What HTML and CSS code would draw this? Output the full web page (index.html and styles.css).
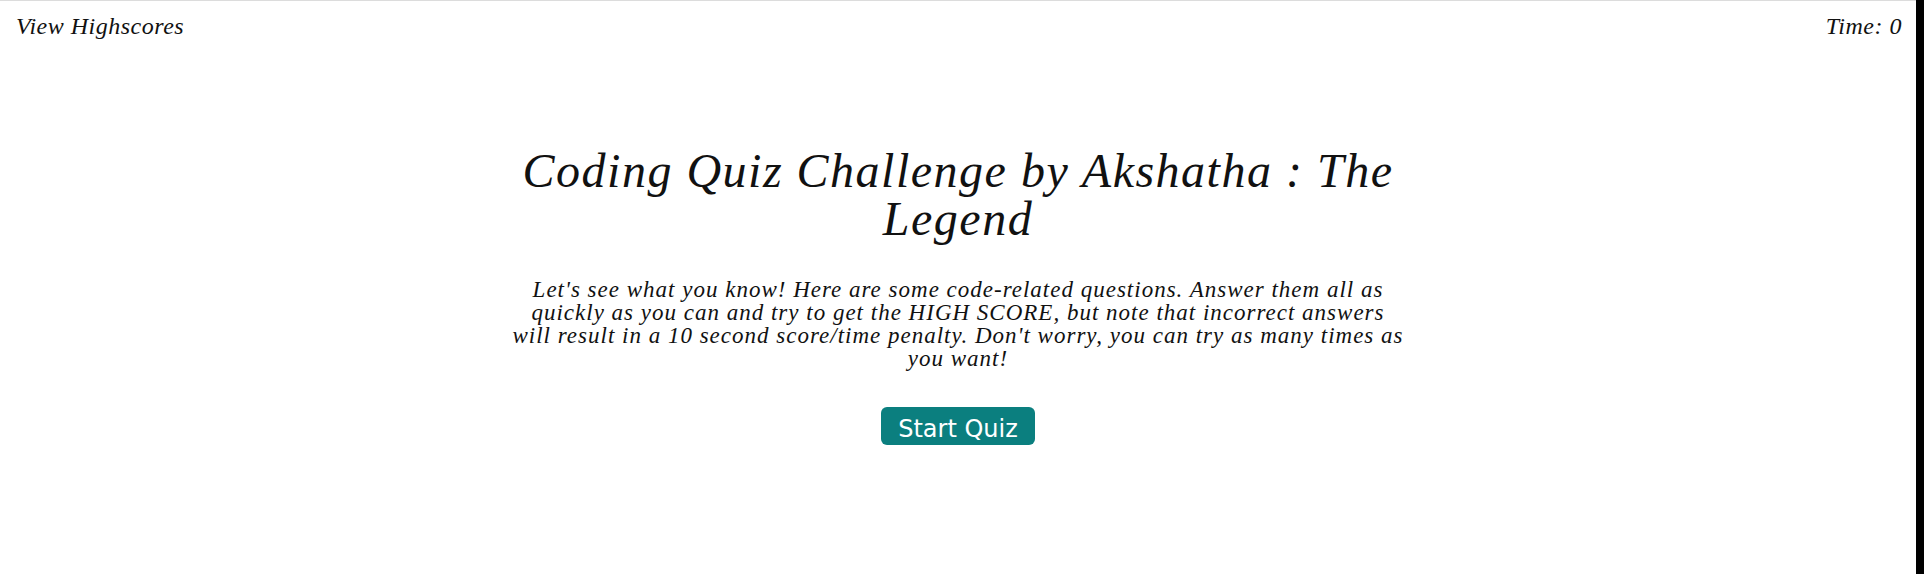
FILE: index.html
```html
<!DOCTYPE html>
<html lang="en">
<head>
<meta charset="utf-8">
<title>Coding Quiz</title>
<link rel="stylesheet" href="styles.css">
</head>
<body>
<div class="page">
  <div class="main">
    <header class="topbar">
      <a class="highscores">View Highscores</a>
      <span class="timer">Time: 0</span>
    </header>
    <section class="intro">
      <h1 class="title">Coding Quiz Challenge by Akshatha : The Legend</h1>
      <p class="lead">Let's see what you know! Here are some code-related questions. Answer them all as quickly as you can and try to get the HIGH SCORE, but note that incorrect answers will result in a 10 second score/time penalty. Don't worry, you can try as many times as you want!</p>
      <button class="start">Start Quiz</button>
    </section>
  </div>
  <div class="rail"></div>
</div>
</body>
</html>
```
FILE: styles.css
```css
html, body {
  margin: 0;
  padding: 0;
  background: #ffffff;
}

body {
  font-family: "Liberation Serif", "Times New Roman", serif;
  font-style: italic;
  color: #111111;
}

.page {
  display: flex;
  min-height: 574px;
}

.main {
  flex: 1;
  border-top: 1px solid #dcdcdc;
}

.rail {
  width: 8px;
  background: #000000;
}

.topbar {
  display: flex;
  justify-content: space-between;
  padding: 13px 14px 0 16px;
  font-size: 24px;
  line-height: 24px;
  letter-spacing: 0.5px;
}

.highscores {
  color: #111111;
  cursor: pointer;
}

.intro {
  width: 895px;
  margin: 0 auto;
  padding-top: 109px;
  text-align: center;
}

.title {
  margin: 0;
  font-size: 48px;
  line-height: 48px;
  font-weight: normal;
  letter-spacing: 1.5px;
}

.lead {
  margin: 35px 0 0;
  font-size: 23px;
  line-height: 23px;
  letter-spacing: 1px;
}

.start {
  margin-top: 37px;
  padding: 8px 17px 2px;
  border: none;
  border-radius: 6px;
  background: #0b7f7f;
  color: #ffffff;
  font-family: "DejaVu Sans", sans-serif;
  font-style: normal;
  font-size: 24px;
  line-height: 28px;
  letter-spacing: 0;
  cursor: pointer;
}
```
